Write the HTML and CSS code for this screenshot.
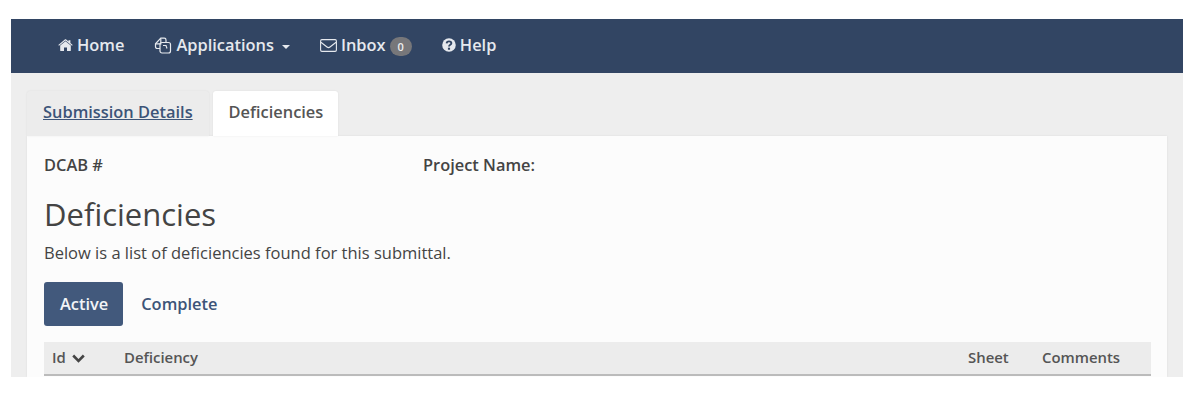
FILE: index.html
```html
<!DOCTYPE html>
<html lang="en">
  <head>
    <meta charset="UTF-8" />
    <title>Deficiencies</title>
    <link rel="stylesheet" href="styles.css">
  </head>
  <body>
    <div class="page">
      <nav class="navbar">
        <a class="nav-link" href="#">
          <svg class="icon" width="15" height="13" viewBox="0 0 15 13"><path fill="currentColor" d="M7.5 2.2 2.2 6.6V11.4c0 .4.3.7.6.7h3.2V8.4h3v3.7h3.2c.3 0 .6-.3.6-.7V6.6zM14.700 5.900 12.400 4V1.200h-1.900v1.200L8.200.5c-.4-.3-1-.3-1.400 0L.3 5.900l.7.9L7.500 1.500 14 6.800z"/></svg>
          <span>Home</span>
        </a>
        <a class="nav-link" href="#">
          <svg class="icon" width="18" height="17" viewBox="0 0 18 17"><g fill="none" stroke="currentColor" stroke-width="1.200"><path d="M6 11.500H3.200c-1 0-1.700-.7-1.700-1.700V6.800L6.800 1.200h3.500c1 0 1.700.7 1.700 1.700V5.500"/><path d="M2 6.800h4.800V1.700"/><rect x="6" y="5.500" width="10.500" height="10.500" rx="2"/><path d="M9 8.500h3l1 3"/></g></svg>
          <span>Applications</span>
          <span class="caret"></span>
        </a>
        <a class="nav-link" href="#">
          <svg class="icon" width="17" height="13" viewBox="0 0 17 13"><g fill="none" stroke="currentColor" stroke-width="1.100"><rect x=".6" y=".6" width="15.800" height="11.800" rx="1.300"/><path d="M.9 3.200 7 8c.9.7 2.100.7 3 0l6.100-4.800"/></g></svg>
          <span>Inbox</span>
          <span class="badge">0</span>
        </a>
        <a class="nav-link" href="#">
          <svg class="icon" width="14" height="14" viewBox="0 0 13 13"><circle cx="6.500" cy="6.500" r="6.300" fill="currentColor"/><path fill="none" stroke="#324563" stroke-width="1.700" d="M4.300 5c.1-1.200 1-1.800 2.200-1.800 1.300 0 2.200.7 2.200 1.700 0 1.400-2.200 1.400-2.200 2.900"/><rect x="5.500" y="9" width="2" height="1.900" fill="#324563"/></svg>
          <span>Help</span>
        </a>
      </nav>
      <div class="content">
        <ul class="tabs">
          <li class="tab"><a href="#">Submission Details</a></li>
          <li class="tab active">Deficiencies</li>
        </ul>
        <div class="panel">
          <div class="meta">
            <div class="meta-id">DCAB #</div>
            <div>Project Name:</div>
          </div>
          <h1>Deficiencies</h1>
          <p class="intro">Below is a list of deficiencies found for this submittal.</p>
          <div class="pills">
            <a class="pill active" href="#">Active</a>
            <a class="pill" href="#">Complete</a>
          </div>
          <table class="list">
            <thead>
              <tr>
                <th class="col-id">Id
                  <svg class="sort" width="13" height="9" viewBox="0 0 13 9"><path fill="none" stroke="currentColor" stroke-width="2.600" d="M1.200 1.500 6.500 6.800 11.800 1.500"/></svg>
                </th>
                <th>Deficiency</th>
                <th class="col-sheet">Sheet</th>
                <th class="col-comments">Comments</th>
              </tr>
            </thead>
          </table>
        </div>
      </div>
    </div>
  </body>
</html>
```

FILE: styles.css
```css
body {
  margin: 0;
  background-color: #fff;
  color: #444;
  font-family: "Open Sans", "Noto Sans", sans-serif;
  font-size: 16.400px;
  line-height: 20px;
}
a {
  text-decoration: none;
}
.page {
  margin: 19px 17px 0 11px;
  height: 358px;
  overflow: hidden;
  background-color: #eee;
}
.navbar {
  display: flex;
  align-items: center;
  gap: 30px;
  height: 54px;
  box-sizing: border-box;
  padding: 0 0 2px 47px;
  background-color: #324563;
}
.nav-link {
  display: flex;
  align-items: center;
  gap: 4px;
  color: #e6e9ee;
  font-size: 16.400px;
  font-weight: 600;
}
.caret {
  width: 0;
  height: 0;
  margin-left: 4px;
  margin-top: 3px;
  border-top: 4px solid #e6e9ee;
  border-left: 4px solid transparent;
  border-right: 4px solid transparent;
}
.badge {
  margin-top: 3px;
  padding: 0 8px;
  border-radius: 10px;
  background-color: #77777a;
  color: #eee;
  font-size: 11px;
  line-height: 19px;
}
.content {
  padding: 18px 16px 0;
}
.tabs {
  display: flex;
  gap: 4px;
  margin: 0;
  padding: 0;
  list-style: none;
}
.tab {
  height: 45px;
  box-sizing: border-box;
  padding: 11px 16px 0;
  border-radius: 3px 3px 0 0;
  background-color: #ececec;
  box-shadow: 0 0 2px rgba(0, 0, 0, 0.08);
  font-weight: 600;
}
.tab a {
  color: #3c5478;
  text-decoration: underline;
}
.tab.active {
  padding-right: 15px;
  background-color: #fff;
  color: #555;
}
.panel {
  height: 241px;
  box-sizing: border-box;
  padding: 19px 16px 0 17px;
  background-color: #fcfcfc;
  box-shadow: 0 0 2px rgba(0, 0, 0, 0.08);
}
.meta {
  display: flex;
  font-weight: 600;
  color: #444;
}
.meta-id {
  width: 379px;
}
h1 {
  margin: 20px 0 0;
  font-size: 31px;
  font-weight: 500;
  line-height: 38px;
  color: #444;
}
.intro {
  margin: 10px 0 0;
  font-size: 16.500px;
  color: #444;
}
.pills {
  display: flex;
  gap: 2px;
  margin-top: 19px;
}
.pill {
  padding: 12px 16px;
  border-radius: 3px;
  color: #3c5478;
  font-weight: 600;
}
.pill.active {
  padding-right: 15px;
  background-color: #42597c;
  color: #f2f4f7;
}
.list {
  width: 100%;
  margin-top: 16px;
  border-collapse: collapse;
}
th {
  height: 33px;
  padding: 0 0 2px;
  box-sizing: border-box;
  border-bottom: 2px solid #bbb;
  background-color: #ececec;
  color: #555;
  font-size: 14.900px;
  font-weight: 600;
  text-align: left;
}
.col-id {
  width: 80px;
  padding-left: 8px;
}
.sort {
  margin-left: 2px;
  color: #444;
}
.col-sheet {
  width: 74px;
}
.col-comments {
  width: 109px;
}
```
